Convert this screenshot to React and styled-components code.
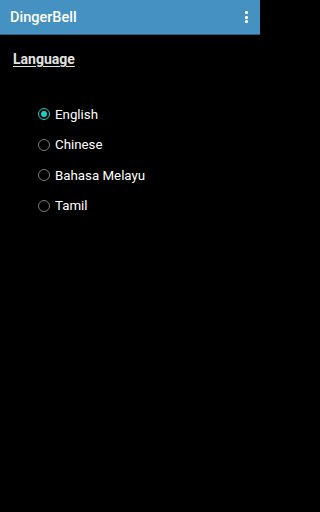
import React, {useState} from "react"
import styled, {createGlobalStyle} from 'styled-components'

const Global = createGlobalStyle`
    html, body {
        margin: 0;
        padding: 0;
        background: #000;
    }
    body {
        font-family: Roboto, "Noto Sans", sans-serif;
    }`;

const Screen = styled.div`
    width: 260px;
    min-height: 100vh;
    background: #000;
    display: flex;
    flex-direction: column;`;

const Toolbar = styled.div`
    height: 34px;
    background-color: #4591c2;
    border-bottom: 1px solid #2c5f80;
    display: flex;
    align-items: center;
    justify-content: space-between;
    padding: 0 10px;
    h1 {
        margin: 0;
        color: #fff;
        font-size: 14.5px;
        font-weight: 500;
    }`;

const Dots = styled.div`
    display: flex;
    flex-direction: column;
    gap: 1.5px;
    padding-right: 2px;
    span {
        width: 3px;
        height: 3px;
        background: #fff;
        border-radius: 1px;
    }`;

const Content = styled.div`
    padding: 16px 13px;`;

const Heading = styled.div`
    color: #e2e2e2;
    font-size: 14px;
    font-weight: 700;
    text-decoration: underline;
    text-underline-offset: 2px;
    margin-bottom: 38px;`;

const Options = styled.div`
    display: flex;
    flex-direction: column;
    gap: 12.5px;
    padding-left: 25px;`;

const Option = styled.label`
    display: flex;
    align-items: center;
    gap: 5px;
    height: 18px;
    color: #fff;
    font-size: 13.3px;
    font-weight: 400;
    cursor: pointer;`;

const Radio = styled.span`
    width: 10px;
    height: 10px;
    border-radius: 50%;
    border: 1.5px solid ${p => p.checked ? '#1ecdc0' : '#7a7a7a'};
    display: flex;
    align-items: center;
    justify-content: center;
    &::after {
        content: "";
        width: 6px;
        height: 6px;
        border-radius: 50%;
        background: ${p => p.checked ? '#1ecdc0' : 'transparent'};
    }`;

const languages = ["English", "Chinese", "Bahasa Melayu", "Tamil"];

export default function App() {
    const [lang, setLang] = useState("English");
    return (
        <Screen>
            <Global/>
            <Toolbar>
                <h1>DingerBell</h1>
                <Dots><span/><span/><span/></Dots>
            </Toolbar>
            <Content>
                <Heading>Language</Heading>
                <Options>
                    {languages.map(l => (
                        <Option key={l} onClick={() => setLang(l)}>
                            <Radio checked={lang === l}/>
                            {l}
                        </Option>
                    ))}
                </Options>
            </Content>
        </Screen>
    )
}
